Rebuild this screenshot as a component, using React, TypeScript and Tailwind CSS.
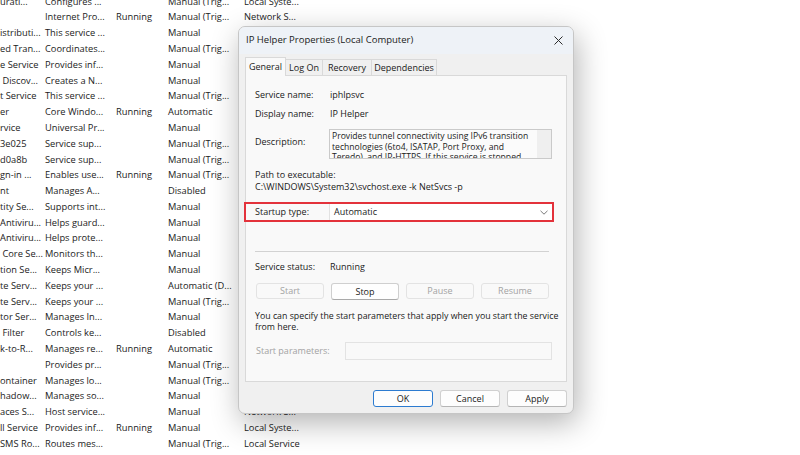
import React from 'react';

type Service = {
  name: string;
  desc: string;
  status?: string;
  startup: string;
  logon?: string;
};

// Services list sitting behind the properties dialog
const services: Service[] = [
  { name: 'urati...', desc: 'Configures ...', startup: 'Manual (Trig...', logon: 'Local Syste...' },
  { name: '', desc: 'Internet Pro...', status: 'Running', startup: 'Manual (Trig...', logon: 'Network S...' },
  { name: 'istributi...', desc: 'This service ...', startup: 'Manual', logon: 'Local Syste...' },
  { name: 'ed Tran...', desc: 'Coordinates...', startup: 'Manual (Trig...', logon: 'Network S...' },
  { name: 'e Service', desc: 'Provides inf...', startup: 'Manual', logon: 'Local Syste...' },
  { name: ' Discov...', desc: 'Creates a N...', startup: 'Manual', logon: 'Local Service' },
  { name: 't Service', desc: 'This service ...', startup: 'Manual (Trig...', logon: 'Local Syste...' },
  { name: 'er', desc: 'Core Windo...', status: 'Running', startup: 'Automatic', logon: 'Local Syste...' },
  { name: 'rvice', desc: 'Universal Pr...', startup: 'Manual', logon: 'Local Syste...' },
  { name: '3e025', desc: 'Service sup...', startup: 'Manual (Trig...', logon: 'Local Syste...' },
  { name: 'd0a8b', desc: 'Service sup...', startup: 'Manual (Trig...', logon: 'Local Syste...' },
  { name: 'gn-in ...', desc: 'Enables use...', status: 'Running', startup: 'Manual (Trig...', logon: 'Local Syste...' },
  { name: 'nt', desc: 'Manages A...', startup: 'Disabled', logon: 'Local Syste...' },
  { name: 'tity Se...', desc: 'Supports int...', startup: 'Manual', logon: 'Local Syste...' },
  { name: 'Antiviru...', desc: 'Helps guard...', startup: 'Manual', logon: 'Local Syste...' },
  { name: 'Antiviru...', desc: 'Helps prote...', startup: 'Manual', logon: 'Local Service' },
  { name: ' Core Se...', desc: 'Monitors th...', startup: 'Manual', logon: 'Local Syste...' },
  { name: 'tion Se...', desc: 'Keeps Micr...', startup: 'Manual', logon: 'Local Syste...' },
  { name: 'te Serv...', desc: 'Keeps your ...', startup: 'Automatic (D...', logon: 'Local Syste...' },
  { name: 'te Serv...', desc: 'Keeps your ...', startup: 'Manual (Trig...', logon: 'Local Syste...' },
  { name: 'tor Ser...', desc: 'Manages In...', startup: 'Manual', logon: 'Local Syste...' },
  { name: ' Filter', desc: 'Controls ke...', startup: 'Disabled', logon: 'Local Service' },
  { name: 'k-to-R...', desc: 'Manages re...', status: 'Running', startup: 'Automatic', logon: 'Local Syste...' },
  { name: '', desc: 'Provides pr...', startup: 'Manual (Trig...', logon: 'Local Syste...' },
  { name: 'ontainer', desc: 'Manages lo...', startup: 'Manual (Trig...', logon: 'Local Syste...' },
  { name: 'hadow...', desc: 'Manages so...', startup: 'Manual', logon: 'Local Syste...' },
  { name: 'aces S...', desc: 'Host service...', startup: 'Manual', logon: 'Network S...' },
  { name: 'll Service', desc: 'Provides inf...', status: 'Running', startup: 'Manual', logon: 'Local Syste...' },
  { name: 'SMS Ro...', desc: 'Routes mes...', startup: 'Manual (Trig...', logon: 'Local Service' },
];

const tabs = [
  { label: 'General', w: 'w-[41px]' },
  { label: 'Log On', w: 'w-[37px]' },
  { label: 'Recovery', w: 'w-[49px]' },
  { label: 'Dependencies', w: 'w-[65px]' },
];

const CloseIcon = () => (
  <svg width="9" height="9" viewBox="0 0 9 9" fill="none">
    <path d="M0.5 0.5L8.5 8.5M8.5 0.5L0.5 8.5" stroke="#2b2b2b" strokeWidth="1" />
  </svg>
);

const Chevron = () => (
  <svg width="8" height="5" viewBox="0 0 8 5" fill="none">
    <path d="M0.5 0.8L4 4.2L7.5 0.8" stroke="#6b6b6b" strokeWidth="0.9" />
  </svg>
);

const ActionButton = ({ label, disabled }: { label: string; disabled?: boolean }) => (
  <div
    className={
      disabled
        ? 'w-[68px] h-[16px] flex items-center justify-center rounded-[3px] border border-[#e3e3e3] bg-[#f9f9f9] text-[#a3a3a3]'
        : 'w-[68px] h-[17px] flex items-center justify-center rounded-[3px] border border-[#cfcfcf] border-b-[#a9a9a9] bg-[#fefefe] text-[#1a1a1a]'
    }
  >
    {label}
  </div>
);

const DialogButton = ({ label, primary }: { label: string; primary?: boolean }) => (
  <div
    className={
      primary
        ? 'w-[60px] h-[17px] flex items-center justify-center rounded-[3px] border border-[#2c7bd0] bg-[#fdfdfd] text-[#1a1a1a]'
        : 'w-[60px] h-[17px] flex items-center justify-center rounded-[3px] border border-[#d0d0d0] border-b-[#b5b5b5] bg-[#fdfdfd] text-[#1a1a1a]'
    }
  >
    {label}
  </div>
);

export default function App() {
  return (
    <div className="relative w-[800px] h-[455px] overflow-hidden bg-white font-['Open_Sans',sans-serif]">
      <div className="flex flex-col mt-[-6.4px] text-[9.3px] text-[#1b1b1b]">
        {services.map((s, i) => (
          <div key={i} className="flex items-center h-[15.8px] whitespace-pre">
            <div className="w-[45px] overflow-hidden">{s.name}</div>
            <div className="w-[71px]">{s.desc}</div>
            <div className="w-[52px]">{s.status ?? ''}</div>
            <div className="w-[76px]">{s.startup}</div>
            <div>{s.logon}</div>
          </div>
        ))}
      </div>

      {/* IP Helper properties window */}
      <div className="absolute left-[238px] top-[26px] w-[336px] h-[388px] flex flex-col rounded-[7px] border border-[#c6c6c6] bg-[#f0f0f0] overflow-hidden shadow-[3px_9px_30px_rgba(0,0,0,0.3)] text-[9px] text-[#1a1a1a]">
        <div className="h-[27px] flex items-center justify-between pl-[7px] pr-[10px] bg-[#eef2f7] text-[9.5px]">
          <span>IP Helper Properties (Local Computer)</span>
          <CloseIcon />
        </div>

        <div className="flex flex-col px-[6px] pt-[3px]">
          <div className="flex items-end h-[18px]">
            {tabs.map((t, i) =>
              i === 0 ? (
                <div
                  key={t.label}
                  className={`${t.w} h-[19px] -mb-px relative z-10 flex items-center justify-center border-x border-t border-[#d9d9d9] bg-[#f9f9f9]`}
                >
                  {t.label}
                </div>
              ) : (
                <div
                  key={t.label}
                  className={`${t.w} h-[16px] flex items-center justify-center border-t border-r border-[#d9d9d9]`}
                >
                  {t.label}
                </div>
              )
            )}
          </div>

          <div className="relative h-[307px] border border-[#d9d9d9] bg-[#f9f9f9] pl-[9px] pr-[14px] pt-[13px] leading-[12px]">
            <div className="flex">
              <div className="w-[75px]">Service name:</div>
              <div>iphlpsvc</div>
            </div>
            <div className="flex mt-[7px]">
              <div className="w-[75px]">Display name:</div>
              <div>IP Helper</div>
            </div>
            <div className="flex mt-[9px]">
              <div className="w-[74px] pt-[7px]">Description:</div>
              <div className="flex-1 h-[30px] flex border border-[#cacaca] bg-[#fbfbfb] overflow-hidden">
                <div className="flex-1 pl-[2px] pt-[1px] text-[8.6px] leading-[10.5px]">
                  Provides tunnel connectivity using IPv6 transition technologies (6to4, ISATAP, Port Proxy, and Teredo), and IP-HTTPS. If this service is stopped
                </div>
                <div className="w-[14px] bg-[#efefef]" />
              </div>
            </div>
            <div className="mt-[10px]">Path to executable:</div>
            <div>C:\WINDOWS\System32\svchost.exe -k NetSvcs -p</div>

            <div className="relative flex items-center mt-[11px] h-[16px]">
              <div className="w-[74px]">Startup type:</div>
              <div className="flex-1 h-[16px] flex items-center justify-between pl-[4px] pr-[4px] bg-white border-l border-[#e2e2e2]">
                <span>Automatic</span>
                <Chevron />
              </div>
              {/* highlight frame */}
              <div className="absolute left-[-11px] right-[-2px] top-[-2px] bottom-[-2px] border-2 border-[#e3323b]" />
            </div>

            <div className="mt-[31px] h-px bg-[#d2d2d2] mr-[3px]" />

            <div className="flex mt-[9px]">
              <div className="w-[75px]">Service status:</div>
              <div>Running</div>
            </div>

            <div className="flex items-start gap-[7px] pl-[1px] mt-[10px]">
              <ActionButton label="Start" disabled />
              <ActionButton label="Stop" />
              <ActionButton label="Pause" disabled />
              <ActionButton label="Resume" disabled />
            </div>

            <div className="mt-[11px] mr-[-10px] leading-[11px] text-[8.8px]">
              You can specify the start parameters that apply when you start the service
              <br />
              from here.
            </div>

            <div className="flex items-center mt-[9px]">
              <div className="w-[90px] pl-[1px] text-[#a3a3a3]">Start parameters:</div>
              <div className="flex-1 h-[18px] border border-[#e3e3e3] bg-[#f9f9f9]" />
            </div>
          </div>

          <div className="flex justify-end gap-[7px] mt-[8px]">
            <DialogButton label="OK" primary />
            <DialogButton label="Cancel" />
            <DialogButton label="Apply" />
          </div>
        </div>
      </div>
    </div>
  );
}
